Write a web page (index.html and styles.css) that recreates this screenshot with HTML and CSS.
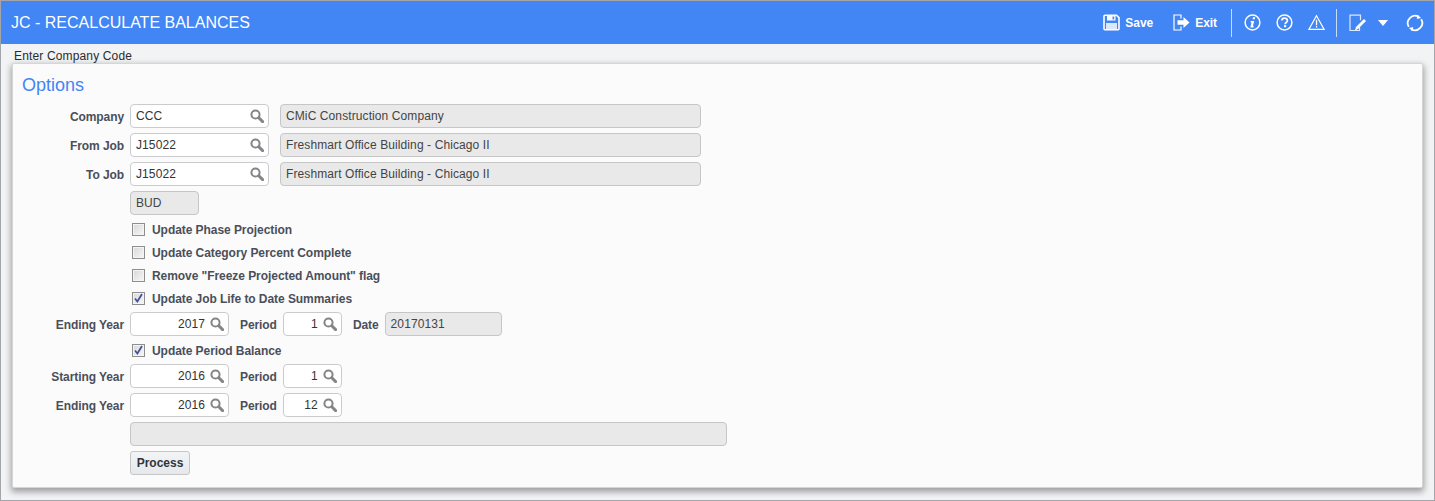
FILE: index.html
```html
<!DOCTYPE html>
<html lang="en">
<head>
    <meta charset="UTF-8">
    <title>JC - Recalculate Balances</title>
    <link rel="stylesheet" href="styles.css">
</head>
<body>
    <svg class="sprites" width="0" height="0">
        <symbol id="mag" viewBox="0 0 14 14">
            <circle cx="5.500" cy="5.500" r="4.100" fill="none" stroke="#858585" stroke-width="2"/>
            <path d="M8.800 8.800l3.800 3.800" stroke="#858585" stroke-width="3" stroke-linecap="round"/>
        </symbol>
    </svg>
    <div class="window">
        <header class="topbar">
            <h1 class="title">JC - RECALCULATE BALANCES</h1>
            <div class="tools">
                <button class="tool tool-save" type="button">
                    <svg width="17" height="17" viewBox="0 0 17 17"><path d="M1 2.200a1 1 0 0 1 1-1h11.500l2.500 2.500v11a1 1 0 0 1-1 1H2a1 1 0 0 1-1-1z" fill="none" stroke="#fff" stroke-width="1.600"/><path d="M4 1.500h8.500v5H4z" fill="#fff"/><path d="M9.500 2.500h1.700v3H9.500z" fill="#4285f4"/><path d="M3 9h11v6H3z" fill="#dbe7fc"/></svg>
                    Save
                </button>
                <button class="tool tool-exit" type="button">
                    <svg width="17" height="17" viewBox="0 0 17 17"><path d="M8 4.500V1H1v15h7v-3.500" fill="none" stroke="#fff" stroke-width="1.200"/><path d="M4.500 6.200h6V3l6 5.500-6 5.500v-3.200h-6z" fill="#fff"/></svg>
                    Exit
                </button>
                <span class="sep sep-one"></span>
                <svg class="ico ico-info" width="17" height="17" viewBox="0 0 17 17"><circle cx="8.500" cy="8.500" r="7.400" fill="none" stroke="#fff" stroke-width="1.500"/><path d="M9 3.300h2.200l-.4 2H8.600zM6.800 7h3.400l-1.300 5.200h1l-.3 1.400H6.300l1.200-5.200h-1z" fill="#fff"/></svg>
                <svg class="ico ico-help" width="17" height="17" viewBox="0 0 17 17"><circle cx="8.500" cy="8.500" r="7.400" fill="none" stroke="#fff" stroke-width="1.500"/><path d="M5.800 6.600c0-3.300 5.600-3.300 5.600-.1 0 2-2.300 1.900-2.300 3.700" fill="none" stroke="#fff" stroke-width="1.700"/><path d="M8 11.200h2.200v2H8z" fill="#fff"/></svg>
                <svg class="ico ico-warn" width="17" height="17" viewBox="0 0 17 17"><path d="M8.500 1.800L16 15.300H1z" fill="none" stroke="#fff" stroke-width="1.200"/><path d="M7.900 5.800h1.300v5.400H7.900zM7.900 12h1.300v1.500H7.900z" fill="#fff"/></svg>
                <span class="sep sep-two"></span>
                <svg class="ico ico-edit" width="18" height="18" viewBox="0 0 18 18"><path d="M10.500 12.500v4H1V1.200h10.500v5" fill="none" stroke="#dce8fd" stroke-width="1.200"/><path d="M6 16.500l1-3.500 8-8 2 2-8 8z" fill="#fff"/></svg>
                <span class="caret"></span>
                <svg class="ico ico-refresh" width="18" height="18" viewBox="0 0 18 18"><path d="M2.800 12.800A7.300 7.300 0 0 1 12.500 2.600M15.200 5.200A7.300 7.300 0 0 1 5.500 15.400" fill="none" stroke="#fff" stroke-width="1.800"/><path d="M11.500 .8l3.600 3.100-4.300 1.200zM6.500 17.200l-3.600-3.100 4.300-1.200z" fill="#fff"/></svg>
            </div>
        </header>
        <div class="hint">Enter Company Code</div>
        <main class="panel">
            <h2 class="panel-title">Options</h2>

            <div class="row row-first">
                <label class="lbl">Company</label>
                <div class="lov w-code"><span>CCC</span><svg><use href="#mag"/></svg></div>
                <div class="ro w-name">CMiC Construction Company</div>
            </div>
            <div class="row">
                <label class="lbl">From Job</label>
                <div class="lov w-code"><span>J15022</span><svg><use href="#mag"/></svg></div>
                <div class="ro w-name">Freshmart Office Building - Chicago II</div>
            </div>
            <div class="row">
                <label class="lbl">To Job</label>
                <div class="lov w-code"><span>J15022</span><svg><use href="#mag"/></svg></div>
                <div class="ro w-name">Freshmart Office Building - Chicago II</div>
            </div>
            <div class="row">
                <span class="lbl"></span>
                <div class="ro w-bud">BUD</div>
            </div>

            <div class="checks">
                <div class="check"><span class="box"></span>Update Phase Projection</div>
                <div class="check"><span class="box"></span>Update Category Percent Complete</div>
                <div class="check"><span class="box"></span>Remove "Freeze Projected Amount" flag</div>
                <div class="check"><span class="box is-on"><svg width="11" height="11" viewBox="0 0 11 11"><path d="M2 5.500l2.400 3L9 1" fill="none" stroke="#3f4f9e" stroke-width="1.700"/></svg></span>Update Job Life to Date Summaries</div>
            </div>

            <div class="row row-year">
                <label class="lbl">Ending Year</label>
                <div class="lov w-year num"><span>2017</span><svg><use href="#mag"/></svg></div>
                <label class="lbl-mid">Period</label>
                <div class="lov w-period num"><span>1</span><svg><use href="#mag"/></svg></div>
                <label class="lbl-date">Date</label>
                <div class="ro w-date">20170131</div>
            </div>

            <div class="checks checks-one">
                <div class="check"><span class="box is-on"><svg width="11" height="11" viewBox="0 0 11 11"><path d="M2 5.500l2.400 3L9 1" fill="none" stroke="#3f4f9e" stroke-width="1.700"/></svg></span>Update Period Balance</div>
            </div>

            <div class="row row-year">
                <label class="lbl">Starting Year</label>
                <div class="lov w-year num"><span>2016</span><svg><use href="#mag"/></svg></div>
                <label class="lbl-mid">Period</label>
                <div class="lov w-period num"><span>1</span><svg><use href="#mag"/></svg></div>
            </div>
            <div class="row">
                <label class="lbl">Ending Year</label>
                <div class="lov w-year num"><span>2016</span><svg><use href="#mag"/></svg></div>
                <label class="lbl-mid">Period</label>
                <div class="lov w-period num"><span>12</span><svg><use href="#mag"/></svg></div>
            </div>
            <div class="row">
                <span class="lbl"></span>
                <div class="ro w-wide"></div>
            </div>
            <div class="row">
                <span class="lbl"></span>
                <button class="process" type="button">Process</button>
            </div>
        </main>
    </div>
</body>
</html>
```

FILE: styles.css
```css
html, body {
    margin: 0;
    padding: 0;
}
body {
    font-family: "Liberation Sans", Arial, sans-serif;
    font-size: 12px;
    color: #3a3f4a;
    background-color: #f2f3f5;
}
.sprites {
    display: block;
    height: 0;
}
.window {
    box-sizing: border-box;
    height: 501px;
    border: 1px solid #a3a5a8;
    background-color: #f2f3f5;
    overflow: hidden;
}
.topbar {
    height: 43px;
    background-color: #4285f4;
    display: flex;
    align-items: center;
    justify-content: space-between;
    color: #fff;
}
.title {
    margin: 0 0 0 10px;
    font-size: 16px;
    font-weight: normal;
    color: #fff;
}
.tools {
    display: flex;
    align-items: center;
    height: 100%;
}
.tool {
    display: flex;
    align-items: center;
    gap: 5px;
    padding: 0;
    border: none;
    background: none;
    color: #fff;
    font-family: inherit;
    font-size: 12px;
    font-weight: bold;
    letter-spacing: -0.05px;
}
.tool-save {
    margin-right: 20px;
}
.tool-exit {
    margin-right: 14px;
}
.sep {
    width: 1px;
    height: 28px;
    background-color: #c9dbfb;
}
.ico {
    display: block;
}
.ico-info {
    margin-left: 12px;
}
.ico-help {
    margin-left: 15px;
}
.ico-warn {
    margin-left: 15px;
}
.sep-two {
    margin-left: 11px;
}
.ico-edit {
    margin-left: 12px;
}
.caret {
    margin-left: 11px;
    width: 0;
    height: 0;
    border-left: 5px solid transparent;
    border-right: 5px solid transparent;
    border-top: 6px solid #fff;
}
.ico-refresh {
    margin-left: 18px;
    margin-right: 10px;
}
.hint {
    height: 19px;
    padding: 6px 0 0 13px;
    box-sizing: border-box;
    line-height: 13px;
    color: #2b2b2b;
    letter-spacing: 0.15px;
}
.panel {
    box-sizing: border-box;
    width: 1411px;
    height: 425px;
    margin-left: 11px;
    padding: 12px 10px 0;
    background-color: #fbfbfb;
    border-radius: 2px;
    border: 1px solid #d6d6d6;
    box-shadow: 0 3px 6px 1px rgba(0, 0, 0, 0.35);
}
.panel-title {
    margin: 0 0 0 -1px;
    height: 16px;
    line-height: 18px;
    font-size: 18px;
    font-weight: normal;
    color: #4285f4;
}
.row {
    display: flex;
    align-items: center;
    height: 24px;
    margin-top: 5px;
}
.row-first {
    margin-top: 12px;
}
.row-year {
    margin-top: 0;
}
.lbl, .lbl-mid, .lbl-date {
    padding-top: 2px;
    font-weight: bold;
    color: #4a4f5a;
    letter-spacing: -0.08px;
}
.lbl {
    box-sizing: border-box;
    width: 101px;
    margin-right: 6px;
    text-align: right;
    flex: none;
}
.lbl-mid {
    margin: 0 6px 0 11px;
}
.lbl-date {
    margin: 0 6px 0 11px;
}
.lov, .ro {
    box-sizing: border-box;
    height: 24px;
    border-radius: 4px;
    display: flex;
    align-items: center;
    padding: 0 5px;
    flex: none;
    letter-spacing: 0.1px;
}
.lov {
    border: 1px solid #c9cbce;
    background-color: #fff;
    color: #333;
    justify-content: space-between;
}
.lov svg {
    width: 14px;
    height: 14px;
    flex: none;
    margin-right: -1px;
}
.lov.num span {
    flex: 1;
    text-align: right;
    padding-right: 5px;
}
.ro {
    border: 1px solid #c6c6c6;
    background-color: #e9e9e9;
    color: #444;
}
.w-code {
    width: 139px;
}
.w-name {
    width: 421px;
    margin-left: 11px;
}
.w-bud {
    width: 69px;
}
.w-year {
    width: 99px;
}
.w-period {
    width: 59px;
}
.w-date {
    width: 117px;
}
.w-wide {
    width: 597px;
}
.checks {
    padding-left: 109px;
    margin-top: 3px;
    height: 94px;
}
.checks-one {
    height: 28px;
    margin-top: 0;
    padding-top: 3px;
    box-sizing: border-box;
}
.check {
    display: flex;
    align-items: center;
    height: 23px;
    font-weight: bold;
    color: #4a4f5a;
    letter-spacing: -0.06px;
}
.box {
    box-sizing: border-box;
    width: 13px;
    height: 13px;
    margin-right: 7px;
    border: 1px solid #8e8e8e;
    background: linear-gradient(135deg, #d8d8d8, #f7f7f7);
    box-shadow: inset 0 0 0 1px #f4f4f4;
    display: flex;
    align-items: center;
    justify-content: center;
}
.box.is-on svg {
    display: block;
    flex: none;
}
.process {
    box-sizing: border-box;
    width: 60px;
    height: 24px;
    padding: 0;
    border: 1px solid #c4c6c9;
    border-radius: 3px;
    background: linear-gradient(#f3f4f5, #e6e8ea);
    color: #2f3540;
    font-family: inherit;
    font-size: 12px;
    font-weight: bold;
}
```
